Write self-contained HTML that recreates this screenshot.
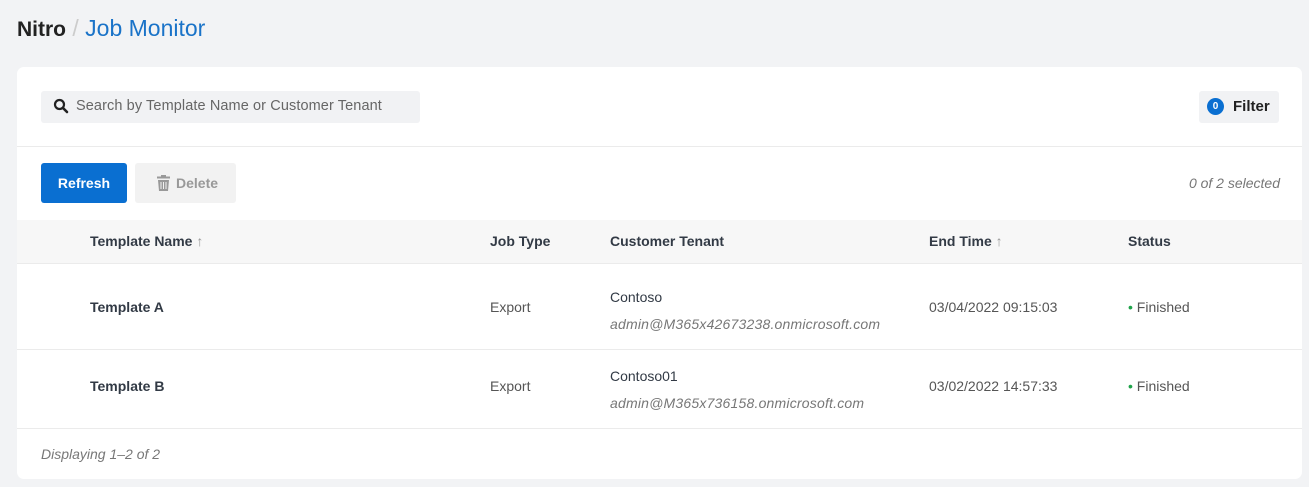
<!DOCTYPE html>
<html><head><meta charset="utf-8"><style>
*{margin:0;padding:0;box-sizing:border-box}
body{width:1309px;height:487px;background:#f2f3f5;font-family:"Liberation Sans",sans-serif;position:relative;overflow:hidden;color:#323a45}
.a{position:absolute;white-space:nowrap}
.card{position:absolute;left:17px;top:67px;width:1285px;height:412px;background:#fff;border-radius:7px;overflow:hidden}
.hr{position:absolute;left:0;width:100%;height:1px;background:#ebebeb}
.b{font-weight:bold;font-size:14px;letter-spacing:0}
.n{font-size:14px;color:#555;letter-spacing:0}
.i{font-style:italic;color:#777;font-size:14px;letter-spacing:0}
</style></head><body>
<div class="a" style="left:17px;top:15px;font-size:23px"><span style="color:#222;font-weight:bold;font-size:21px">Nitro</span> <span style="color:#ccc">/</span> <span style="color:#1a73c8">Job Monitor</span></div>
<div class="card">
  <div class="a" style="left:24px;top:24px;width:379px;height:32px;background:#f1f2f4;border-radius:3px"></div>
  <svg class="a" style="left:36px;top:31px" width="16" height="16" viewBox="0 0 16 16"><circle cx="6.5" cy="6.5" r="4.5" fill="none" stroke="#222" stroke-width="2.2"/><line x1="10" y1="10" x2="14" y2="14" stroke="#222" stroke-width="2.6" stroke-linecap="round"/></svg>
  <div class="a" style="left:59px;top:31px;font-size:14.5px;color:#666;letter-spacing:0.1px">Search by Template Name or Customer Tenant</div>
  <div class="a" style="left:1182px;top:24px;width:80px;height:32px;background:#f1f2f4;border-radius:3px"></div>
  <div class="a" style="left:1190px;top:31px;width:17px;height:17px;border-radius:50%;background:#0a6fd1;color:#fff;font-size:10px;font-weight:bold;text-align:center;line-height:17px">0</div>
  <div class="a b" style="left:1216px;top:31px;font-size:15px;color:#222">Filter</div>
  <div class="hr" style="top:79px"></div>
  <div class="a" style="left:24px;top:96px;width:86px;height:40px;background:#0a6fd1;border-radius:3px;color:#fff;font-weight:bold;font-size:14px;text-align:center;line-height:40px">Refresh</div>
  <div class="a" style="left:118px;top:96px;width:101px;height:40px;background:#f2f2f2;border-radius:3px"></div>
  <svg class="a" style="left:139px;top:108px" width="15" height="16" viewBox="0 0 15 16"><rect x="1" y="1.5" width="13" height="2" fill="#999"/><rect x="5" y="0" width="5" height="2" fill="#999"/><path d="M2 5h11l-1 11H3z" fill="#999"/><path d="M5 7v7M7.5 7v7M10 7v7" stroke="#f2f2f2" stroke-width="1"/></svg>
  <div class="a" style="left:159px;top:108px;font-weight:bold;font-size:14px;color:#999">Delete</div>
  <div class="a i" style="right:22px;top:108px">0 of 2 selected</div>
  <div class="a" style="left:0;top:153px;width:100%;height:43px;background:#f7f7f7"></div>
  <div class="a b" style="left:73px;top:166px">Template Name <span style="color:#999;font-weight:normal">↑</span></div>
  <div class="a b" style="left:473px;top:166px">Job Type</div>
  <div class="a b" style="left:593px;top:166px">Customer Tenant</div>
  <div class="a b" style="left:912px;top:166px">End Time <span style="color:#999;font-weight:normal">↑</span></div>
  <div class="a b" style="left:1111px;top:166px">Status</div>
  <div class="hr" style="top:196px"></div>
  <div class="a b" style="left:73px;top:232px">Template A</div>
  <div class="a n" style="left:473px;top:232px">Export</div>
  <div class="a n" style="left:593px;top:222px;color:#323a45">Contoso</div>
  <div class="a i" style="left:593px;top:249px;letter-spacing:0.2px">admin@M365x42673238.onmicrosoft.com</div>
  <div class="a n" style="left:912px;top:232px">03/04/2022 09:15:03</div>
  <div class="a n" style="left:1111px;top:232px"><span style="color:#1fa34a">•</span> Finished</div>
  <div class="hr" style="top:282px"></div>
  <div class="a b" style="left:73px;top:311px">Template B</div>
  <div class="a n" style="left:473px;top:311px">Export</div>
  <div class="a n" style="left:593px;top:301px;color:#323a45">Contoso01</div>
  <div class="a i" style="left:593px;top:328px;letter-spacing:0.2px">admin@M365x736158.onmicrosoft.com</div>
  <div class="a n" style="left:912px;top:311px">03/02/2022 14:57:33</div>
  <div class="a n" style="left:1111px;top:311px"><span style="color:#1fa34a">•</span> Finished</div>
  <div class="hr" style="top:361px"></div>
  <div class="a i" style="left:24px;top:379px">Displaying 1–2 of 2</div>
</div>
</body></html>
